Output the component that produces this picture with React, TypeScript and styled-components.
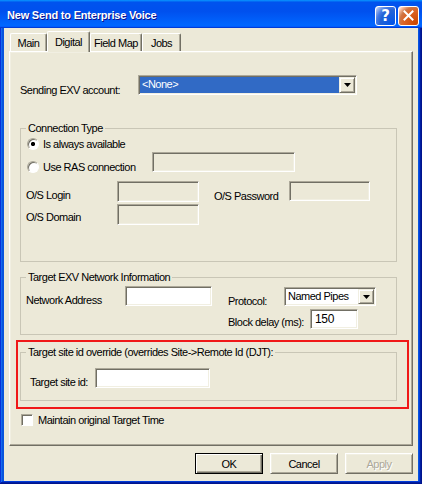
import React from "react";
import styled, { createGlobalStyle, css } from "styled-components";

const Global = createGlobalStyle`
  html, body { margin: 0; padding: 0; }
  body {
    width: 422px; height: 484px; overflow: hidden;
    font-family: "Liberation Sans", Arial, sans-serif;
    font-size: 11px; letter-spacing: -0.5px; color: #000;
  }
  * { box-sizing: border-box; }
`;

const Window = styled.div`
  width: 422px; height: 484px;
  display: flex; flex-direction: column;
  background: #0855dd;
  box-shadow: inset -1px -1px #00138c, inset 1px 1px #0831d9, inset -2px -2px #001ea0,
    inset 2px 2px #166aee, inset -3px -3px #003bda, inset 3px 3px #0855dd;
`;

const TitleBar = styled.div`
  height: 28px; flex: none;
  display: flex; align-items: center; gap: 2px;
  padding: 3px 3px 0 7px;
  background: linear-gradient(180deg, #0997ff, #0053ee 8%, #0050ee 40%, #06f 88%, #06f 93%, #005bff 95%, #003dd7 96%, #003dd7);
`;

const TitleText = styled.div`
  flex: 1;
  color: #fff; font-weight: bold; font-size: 11px; letter-spacing: -0.2px;
  text-shadow: 1px 1px #0f1089;
  white-space: nowrap;
  margin-top: -2px;
`;

const TitleButton = styled.div<{ $close?: boolean }>`
  width: 21px; height: 20px; flex: none;
  border: 1px solid #fff; border-radius: 3px;
  display: flex; align-items: center; justify-content: center;
  color: #fff; font-weight: bold; font-size: 15px; letter-spacing: 0;
  font-family: "DejaVu Sans", sans-serif;
  background: ${(p) =>
    p.$close
      ? "radial-gradient(circle at 90% 90%, #cc4600 0%, #dc6527 55%, #cd7546 70%, #ffccb2 90%, #fff 100%)"
      : "radial-gradient(circle at 90% 90%, #0054e9 0%, #2263d5 55%, #4479e4 70%, #a3bbec 90%, #fff 100%)"};
`;

const Client = styled.div`
  flex: 1;
  margin: 0 4px 3px 4px;
  background: #ece9d8;
  display: flex; flex-direction: column;
  padding: 3px 5px 0 5px;
`;

const TabRow = styled.div`
  display: flex; align-items: flex-end;
  height: 21px; margin: 0 0 -1px 1px;
  position: relative; z-index: 2;
`;

const Tab = styled.div<{ $w: number; $active?: boolean }>`
  width: ${(p) => p.$w}px;
  height: ${(p) => (p.$active ? 21 : 18)}px;
  margin-bottom: ${(p) => (p.$active ? 0 : 1)}px;
  background: #ece9d8;
  border-top: 1px solid #fff; border-left: 1px solid #fff;
  border-right: 1px solid #716f64;
  border-radius: 2px 2px 0 0;
  box-shadow: inset -1px 0 #aca899;
  display: flex; align-items: center; justify-content: center;
  padding-bottom: ${(p) => (p.$active ? 1 : 0)}px;
  white-space: nowrap;
`;

const Panel = styled.div`
  height: 395px;
  border-style: solid; border-width: 1px;
  border-color: #fff #716f64 #716f64 #fff;
  box-shadow: inset -1px -1px #aca899, inset 1px 1px #f1efe2;
  display: flex; flex-direction: column; align-items: flex-start;
  padding-left: 10px;
`;

const Row = styled.div<{ $mt: number; $h: number; $ml?: number }>`
  display: flex; align-items: flex-start;
  height: ${(p) => p.$h}px;
  margin-top: ${(p) => p.$mt}px;
  margin-left: ${(p) => p.$ml ?? 0}px;
`;

const Label = styled.span<{ $w: number; $mt: number; $ml?: number }>`
  width: ${(p) => p.$w}px; flex: none;
  margin-top: ${(p) => p.$mt}px;
  margin-left: ${(p) => p.$ml ?? 0}px;
  line-height: 14px; white-space: nowrap;
`;

const sunken = css`
  border-style: solid; border-width: 1px;
  border-color: #aca899 #fff #fff #aca899;
  box-shadow: inset 1px 1px 0 #716f64, inset -1px -1px 0 #f1efe2;
`;

const TextBox = styled.div<{ $w: number; $h: number; $mt?: number; $on?: boolean }>`
  ${sunken};
  width: ${(p) => p.$w}px; height: ${(p) => p.$h}px; flex: none;
  margin-top: ${(p) => p.$mt ?? 0}px;
  background: ${(p) => (p.$on ? "#fff" : "#ece9d8")};
  padding: 1px 3px 0 4px;
  font-size: 12px; line-height: 16px; letter-spacing: -0.3px;
`;

const Combo = styled.div<{ $w: number; $h: number; $mt?: number }>`
  ${sunken};
  width: ${(p) => p.$w}px; height: ${(p) => p.$h}px; flex: none;
  margin-top: ${(p) => p.$mt ?? 0}px;
  background: #fff;
  display: flex; padding: 1px;
`;

const ComboValue = styled.div<{ $selected?: boolean }>`
  flex: 1;
  background: ${(p) => (p.$selected ? "#316ac5" : "#fff")};
  color: ${(p) => (p.$selected ? "#fff" : "#000")};
  padding-left: 2px; line-height: 15px; white-space: nowrap; overflow: hidden;
`;

const DropButton = styled.div`
  width: 16px; flex: none;
  background: #ece9d8;
  border-style: solid; border-width: 1px;
  border-color: #f1efe2 #716f64 #716f64 #f1efe2;
  box-shadow: inset 1px 1px #fff, inset -1px -1px #aca899;
  display: flex; align-items: center; justify-content: center;
`;

const Group = styled.fieldset<{ $mt: number; $pb: number }>`
  width: 377px; flex: none;
  margin: ${(p) => p.$mt}px 0 0 0;
  padding: 0 5px ${(p) => p.$pb}px 5px;
  border: 1px solid #c9c6b6;
  min-width: 0;
`;

const Legend = styled.legend`
  padding: 0 2px; margin: 0;
  line-height: 14px; white-space: nowrap;
`;

const RadioLabel = styled.label<{ $w: number; $mt: number }>`
  width: ${(p) => p.$w}px; flex: none;
  margin: ${(p) => p.$mt}px 0 0 1px;
  display: flex; align-items: center; gap: 4px;
  line-height: 14px; white-space: nowrap;
`;

const Radio = styled.span<{ $checked?: boolean }>`
  width: 12px; height: 12px; flex: none;
  border-radius: 50%;
  border: 1px solid; border-color: #aca899 #fff #fff #aca899;
  box-shadow: inset 1px 1px 0 #716f64;
  background: ${(p) =>
    p.$checked ? "radial-gradient(circle at 50% 50%, #000 0 1.8px, #fff 2.4px)" : "#fff"};
`;

const RedBox = styled.div`
  width: 393px; flex: none;
  margin: 5px 0 0 -4px;
  border: 2px solid #f01818;
  padding: 3px 10px 6px 2px;
`;

const CheckRow = styled.label`
  display: flex; align-items: center; gap: 5px;
  height: 13px; margin: 4px 0 0 1px;
  white-space: nowrap; line-height: 14px;
`;

const CheckBox = styled.span`
  width: 12px; height: 12px; flex: none;
  background: #fff;
  border: 1px solid; border-color: #aca899 #fff #fff #aca899;
  box-shadow: inset 1px 1px 0 #716f64;
`;

const ButtonRow = styled.div`
  display: flex; justify-content: flex-end; gap: 7px;
  margin-top: 7px;
`;

const Button = styled.div<{ $default?: boolean; $disabled?: boolean }>`
  width: 68px; height: 21px;
  display: flex; align-items: center; justify-content: center;
  background: #ece9d8;
  border: 1px solid;
  ${(p) =>
    p.$default
      ? css`
          border-color: #000;
          box-shadow: inset 1px 1px #fff, inset -1px -1px #716f64, inset -2px -2px #aca899;
        `
      : css`
          border-color: #fff #716f64 #716f64 #fff;
          box-shadow: inset 1px 1px #f1efe2, inset -1px -1px #aca899;
        `}
  color: ${(p) => (p.$disabled ? "#aca899" : "#000")};
  text-shadow: ${(p) => (p.$disabled ? "1px 1px #fff" : "none")};
`;

const Arrow = () => (
  <svg width="7" height="4" viewBox="0 0 7 4">
    <path d="M0 0h7L3.5 4z" fill="#000" />
  </svg>
);

export default function App() {
  return (
    <>
      <Global />
      <Window>
        <TitleBar>
          <TitleText>New Send to Enterprise Voice</TitleText>
          <TitleButton>?</TitleButton>
          <TitleButton $close>
            <svg width="11" height="11" viewBox="0 0 11 11">
              <path d="M1.5 1.5l8 8M9.5 1.5l-8 8" stroke="#fff" strokeWidth="2" strokeLinecap="square" />
            </svg>
          </TitleButton>
        </TitleBar>
        <Client>
          <TabRow>
            <Tab $w={37}>Main</Tab>
            <Tab $w={43} $active>Digital</Tab>
            <Tab $w={52}>Field Map</Tab>
            <Tab $w={39}>Jobs</Tab>
          </TabRow>
          <Panel>
            <Row $mt={23} $h={20}>
              <Label $w={118} $mt={8}>Sending EXV account:</Label>
              <Combo $w={219} $h={20}>
                <ComboValue $selected>&lt;None&gt;</ComboValue>
                <DropButton><Arrow /></DropButton>
              </Combo>
            </Row>

            <Group $mt={26} $pb={36}>
              <Legend>Connection Type</Legend>
              <Row $mt={2} $h={14}>
                <RadioLabel $w={125} $mt={0}>
                  <Radio $checked />
                  Is always available
                </RadioLabel>
              </Row>
              <Row $mt={1} $h={20}>
                <RadioLabel $w={125} $mt={8}>
                  <Radio />
                  Use RAS connection
                </RadioLabel>
                <TextBox $w={143} $h={20} />
              </Row>
              <Row $mt={9} $h={21}>
                <Label $w={91} $mt={7}>O/S Login</Label>
                <TextBox $w={82} $h={21} />
                <Label $w={75} $mt={8} $ml={15}>O/S Password</Label>
                <TextBox $w={81} $h={20} />
              </Row>
              <Row $mt={2} $h={21}>
                <Label $w={91} $mt={6}>O/S Domain</Label>
                <TextBox $w={82} $h={21} />
              </Row>
            </Group>

            <Group $mt={8} $pb={5}>
              <Legend>Target EXV Network Information</Legend>
              <Row $mt={2} $h={20}>
                <Label $w={99} $mt={7}>Network Address</Label>
                <TextBox $w={87} $h={20} $on />
                <Label $w={56} $mt={8} $ml={16}>Protocol:</Label>
                <Combo $w={92} $h={19} $mt={1}>
                  <ComboValue>Named Pipes</ComboValue>
                  <DropButton><Arrow /></DropButton>
                </Combo>
              </Row>
              <Row $mt={3} $h={20}>
                <Label $w={82} $mt={6} $ml={202}>Block delay (ms):</Label>
                <TextBox $w={48} $h={20} $on>150</TextBox>
              </Row>
            </Group>

            <RedBox>
              <Group $mt={0} $pb={12}>
                <Legend>Target site id override (overrides Site-&gt;Remote Id (DJT):</Legend>
                <Row $mt={9} $h={20}>
                  <Label $w={65} $mt={7} $ml={4}>Target site id:</Label>
                  <TextBox $w={115} $h={20} $on />
                </Row>
              </Group>
            </RedBox>

            <CheckRow>
              <CheckBox />
              Maintain original Target Time
            </CheckRow>
          </Panel>
          <ButtonRow>
            <Button $default>OK</Button>
            <Button>Cancel</Button>
            <Button $disabled>Apply</Button>
          </ButtonRow>
        </Client>
      </Window>
    </>
  );
}
